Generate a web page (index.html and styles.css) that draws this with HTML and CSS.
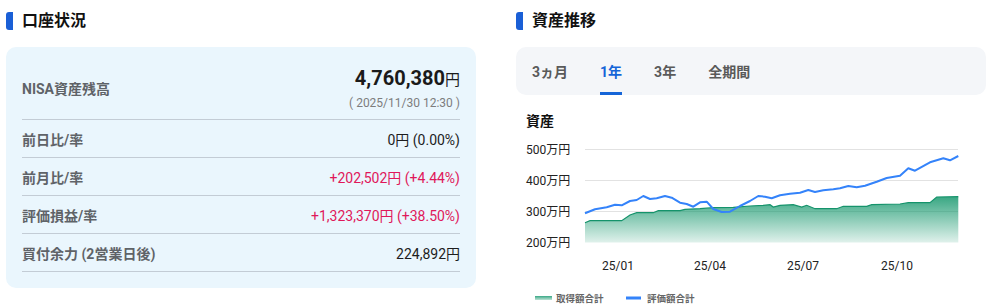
FILE: index.html
```html
<!DOCTYPE html>
<html lang="ja">
<head>
<meta charset="utf-8">
<title>口座状況</title>
<link rel="stylesheet" href="styles.css">
</head>
<body>
<div class="page">
  <section class="col">
    <h2 class="title"><span class="bar"></span>口座状況</h2>
    <div class="card">
      <div class="row row-main">
        <div class="label">NISA資産残高</div>
        <div class="value-block">
          <div class="big">4,760,380<span class="yen">円</span></div>
          <div class="date">( 2025/11/30 12:30 )</div>
        </div>
      </div>
      <div class="row">
        <div class="label">前日比/率</div>
        <div class="value">0円 (0.00%)</div>
      </div>
      <div class="row">
        <div class="label">前月比/率</div>
        <div class="value plus">+202,502円 (+4.44%)</div>
      </div>
      <div class="row">
        <div class="label">評価損益/率</div>
        <div class="value plus">+1,323,370円 (+38.50%)</div>
      </div>
      <div class="row">
        <div class="label">買付余力 (2営業日後)</div>
        <div class="value">224,892円</div>
      </div>
    </div>
  </section>
  <section class="col">
    <h2 class="title"><span class="bar"></span>資産推移</h2>
    <div class="tabs">
      <div class="tab">3ヵ月</div>
      <div class="tab active">1年</div>
      <div class="tab">3年</div>
      <div class="tab">全期間</div>
    </div>
    <div class="chart-title">資産</div>
    <svg class="chart" width="470" height="173" viewBox="516 135 470 173">
      <defs>
        <linearGradient id="g" x1="0" y1="0" x2="0" y2="1">
          <stop offset="0" stop-color="#0e9468" stop-opacity="0.82"/>
          <stop offset="1" stop-color="#0e9468" stop-opacity="0.13"/>
        </linearGradient>
        <linearGradient id="g2" x1="0" y1="0" x2="0" y2="1">
          <stop offset="0" stop-color="#3aa886"/>
          <stop offset="1" stop-color="#bfe3d6"/>
        </linearGradient>
      </defs>
      <g class="grid">
        <line x1="585" y1="149.5" x2="958" y2="149.5"/>
        <line x1="585" y1="180.5" x2="958" y2="180.5"/>
        <line x1="585" y1="211.5" x2="958" y2="211.5"/>
      </g>
      <g class="ylab">
        <text x="526" y="153.5">500万円</text>
        <text x="526" y="184.5">400万円</text>
        <text x="526" y="215.5">300万円</text>
        <text x="526" y="246.5">200万円</text>
      </g>
      <path class="area" fill="url(#g)" d="M585,222.7 L590,220.7 L621.7,220.7 L630,215 L636.7,212.7 L653.3,212.7 L658.3,210.7 L680,210.7 L685,209.3 L700,208.7 L713.3,207.7 L733.3,207.3 L750,206 L763.3,205.3 L770,204.7 L773.3,207 L780,205.3 L793.3,204.7 L801.7,207 L806.7,205.3 L815,208.7 L836.7,208.7 L843.3,206.3 L866.7,206.3 L871.7,204.7 L900,204 L908.3,202.7 L930,202.7 L936.7,197 L958.3,196.7 L958.3,242.5 L585,242.5 Z"/>
      <path class="area-top" d="M585,222.7 L590,220.7 L621.7,220.7 L630,215 L636.7,212.7 L653.3,212.7 L658.3,210.7 L680,210.7 L685,209.3 L700,208.7 L713.3,207.7 L733.3,207.3 L750,206 L763.3,205.3 L770,204.7 L773.3,207 L780,205.3 L793.3,204.7 L801.7,207 L806.7,205.3 L815,208.7 L836.7,208.7 L843.3,206.3 L866.7,206.3 L871.7,204.7 L900,204 L908.3,202.7 L930,202.7 L936.7,197 L958.3,196.7"/>
      <path class="line" d="M585,213.3 L595,209.3 L606.7,207.3 L615,204.7 L621.7,205.3 L630,201 L636.7,200 L643.3,196 L650,199 L656.7,198.3 L665,196 L671.7,197.7 L680,202.7 L686.7,204 L693.3,206.7 L700,202.3 L706.7,201.7 L713.3,209 L721.7,212 L730,211.7 L740,206 L750,201 L758.3,196 L765,196.7 L771.7,198.3 L780,195.3 L790,193.7 L800,192.7 L808.3,190 L815,192 L823.3,190.3 L833.3,189.3 L840,188.3 L848.3,186 L856.7,187.3 L865,185.7 L876.7,181.7 L886.7,178 L900,175.7 L908.3,168.3 L915,170.7 L930,162.3 L940,159.3 L943.3,158.3 L950,160.3 L958.3,156"/>
      <g class="xlab">
        <text x="618" y="269.5">25/01</text>
        <text x="710" y="269.5">25/04</text>
        <text x="803" y="269.5">25/07</text>
        <text x="897" y="269.5">25/10</text>
      </g>
      <rect x="535" y="296" width="17" height="4" fill="url(#g2)"/>
      <text class="legend" x="556" y="301.5">取得額合計</text>
      <rect x="626" y="296.5" width="15" height="3" fill="#3483fa"/>
      <text class="legend" x="647" y="301.5">評価額合計</text>
    </svg>
  </section>
</div>
</body>
</html>
```
FILE: styles.css
```css
* { box-sizing: border-box; }
html, body { margin: 0; padding: 0; background: #fff; }
body {
  font-family: Roboto, "Noto Sans CJK JP", sans-serif;
  color: #222;
}
.page {
  display: flex;
  gap: 40px;
  padding: 12px 0 0 6px;
}
.col {
  width: 470px;
  flex: none;
}
.title {
  display: flex;
  align-items: center;
  margin: 0 0 17px 0;
  height: 18px;
  font-size: 16px;
  font-weight: 700;
  line-height: 18px;
  color: #111;
}
.bar {
  width: 7px;
  height: 18px;
  background: #1a5fd6;
  border-radius: 3px 0 0 3px;
  margin-right: 9px;
}
.card {
  background: #eaf6fd;
  border-radius: 10px;
  padding: 17px 16px 16px 16px;
}
.row {
  display: flex;
  justify-content: space-between;
  align-items: center;
  height: 38px;
  border-bottom: 1px solid #c3ccd5;
}
.row-main {
  height: 56px;
  padding-bottom: 7px;
}
.label {
  font-size: 14px;
  font-weight: 700;
  color: #5f6368;
}
.value {
  font-size: 14px;
  color: #1d1d1d;
}
.value.plus { color: #e0185a; }
.value-block { text-align: right; }
.big {
  font-size: 20px;
  font-weight: 700;
  line-height: 24px;
  color: #1a1a1a;
}
.yen {
  font-size: 15px;
  font-weight: 400;
}
.date {
  font-size: 12px;
  line-height: 16px;
  margin-top: 3px;
  color: #7d7d7d;
}
.tabs {
  display: flex;
  gap: 32px;
  height: 48px;
  padding: 0 16px;
  background: #f4f6f9;
  border-radius: 10px;
}
.tab {
  display: flex;
  align-items: center;
  font-size: 14px;
  font-weight: 700;
  color: #5a5a5a;
  border-top: 3px solid transparent;
  border-bottom: 3px solid transparent;
}
.tab.active {
  color: #1565d8;
  border-bottom-color: #1565d8;
}
.chart-title {
  margin: 16px 0 0 10px;
  font-size: 14px;
  font-weight: 700;
  line-height: 20px;
  color: #111;
}
.chart {
  display: block;
  margin-top: 4px;
}
.grid line { stroke: #e2e2e2; stroke-width: 1; }
.ylab text, .xlab text {
  font-family: Roboto, "Noto Sans CJK JP", sans-serif;
  font-size: 12px;
  fill: #222;
}
.xlab text { text-anchor: middle; }
.area-top { fill: none; stroke: #15936b; stroke-width: 1.2; }
.line { fill: none; stroke: #3483fa; stroke-width: 2; stroke-linejoin: round; }
.legend {
  font-family: Roboto, "Noto Sans CJK JP", sans-serif;
  font-size: 9.5px;
  font-weight: 700;
  fill: #666;
}
```
